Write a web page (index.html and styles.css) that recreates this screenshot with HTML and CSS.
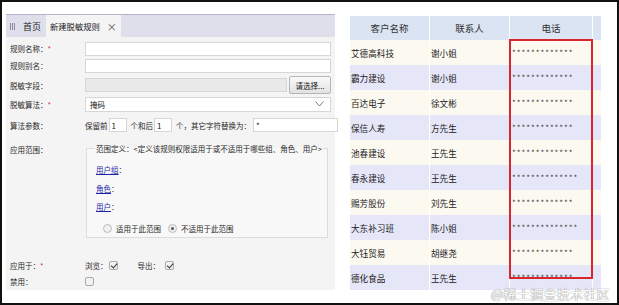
FILE: index.html
```html
<!DOCTYPE html>
<html lang="zh-CN">
<head>
    <meta charset="UTF-8">
    <title>脱敏规则</title>
    <link rel="stylesheet" href="styles.css">
</head>
<body>
<div class="frame">

    <div class="panel">
        <div class="tabbar">
            <span class="tab-menu">
                <svg width="6" height="7" viewBox="0 0 6 7"><path d="M0.5 0v7M2.5 0v7M4.5 0v7" stroke="#8a8a9a" stroke-width="1"/></svg>
            </span>
            <span class="tab">首页</span>
            <span class="tab active">新建脱敏规则<span class="tab-close">×</span></span>
        </div>

        <div class="form">
            <div class="row r1">
                <label class="lbl">规则名称：<em>*</em></label>
                <input type="text" class="txt wide">
            </div>
            <div class="row r2">
                <label class="lbl">规则别名：</label>
                <input type="text" class="txt wide">
            </div>
            <div class="row r3">
                <label class="lbl">脱敏字段：</label>
                <input type="text" class="txt field" disabled>
                <button class="btn">请选择...</button>
            </div>
            <div class="row r4">
                <label class="lbl">脱敏算法：<em>*</em></label>
                <div class="select">
                    <span>掩码</span>
                    <svg width="9" height="6" viewBox="0 0 9 6"><path d="M0.5 0.5l4 4.5 4-4.5" fill="none" stroke="#777" stroke-width="1"/></svg>
                </div>
            </div>
            <div class="row r5">
                <label class="lbl">算法参数：</label>
                <span class="txt-plain">保留前</span>
                <input type="text" class="txt num" value="1">
                <span class="txt-plain gap">个和后</span>
                <input type="text" class="txt num" value="1">
                <span class="txt-plain gap2">个，其它字符替换为：</span>
                <input type="text" class="txt mask" value="*">
            </div>
            <div class="row r6">
                <label class="lbl">应用范围：</label>
                <fieldset class="scope">
                    <legend>范围定义：&lt;定义该规则权限适用于或不适用于哪些组、角色、用户&gt;</legend>
                    <div class="scope-item"><a href="#">用户组</a>：</div>
                    <div class="scope-item"><a href="#">角色</a>：</div>
                    <div class="scope-item"><a href="#">用户</a>：</div>
                    <div class="radios">
                        <span class="radio"></span><span>适用于此范围</span>
                        <span class="radio on"></span><span>不适用于此范围</span>
                    </div>
                </fieldset>
            </div>
            <div class="row r7">
                <label class="lbl">应用于：<em>*</em></label>
                <span class="txt-plain">浏览：</span>
                <span class="check on"></span>
                <span class="txt-plain export">导出：</span>
                <span class="check on"></span>
            </div>
            <div class="row r8">
                <label class="lbl">禁用：</label>
                <span class="check"></span>
            </div>
        </div>
    </div>

    <div class="grid-wrap">
        <table class="grid">
            <thead>
                <tr><th class="c1">客户名称</th><th class="c2">联系人</th><th class="c3">电话</th><th class="c4"></th></tr>
            </thead>
            <tbody>
                <tr><td>艾德高科技</td><td>谢小姐</td><td class="tel">*************</td><td></td></tr>
                <tr><td>霸力建设</td><td>谢小姐</td><td class="tel">*************</td><td></td></tr>
                <tr><td>百达电子</td><td>徐文彬</td><td class="tel">*************</td><td></td></tr>
                <tr><td>保信人寿</td><td>方先生</td><td class="tel">*************</td><td></td></tr>
                <tr><td>池春建设</td><td>王先生</td><td class="tel">*************</td><td></td></tr>
                <tr><td>春永建设</td><td>王先生</td><td class="tel">**************</td><td></td></tr>
                <tr><td>赐芳股份</td><td>刘先生</td><td class="tel">*************</td><td></td></tr>
                <tr><td>大东补习班</td><td>陈小姐</td><td class="tel">**************</td><td></td></tr>
                <tr><td>大钰贸易</td><td>胡继尧</td><td class="tel">*************</td><td></td></tr>
                <tr><td>德化食品</td><td>王先生</td><td class="tel">*************</td><td></td></tr>
            </tbody>
        </table>
        <div class="highlight"></div>
    </div>

    <div class="watermark">@稀土掘金技术社区</div>
</div>
</body>
</html>
```

FILE: styles.css
```css
* { box-sizing: border-box; }
body { margin: 0; background: #fff; font-family: "Noto Sans CJK SC", "Noto Sans", sans-serif; color: #222; }
.frame { position: relative; width: 619px; height: 305px; border: 2px solid #111; display: flex; align-items: flex-start; overflow: hidden; }

/* left: rule form */
.panel { margin: 12px 0 0 4px; width: 329px; height: 276px; background: #f4f4f4; font-size: 7.5px; }
.tabbar { height: 23px; background: #dfdfec; border-top: 1px solid #b4b4cc; display: flex; align-items: stretch; }
.tab-menu { width: 14px; display: flex; align-items: center; justify-content: center; }
.tab { padding: 0 5px 0 3px; display: flex; align-items: center; font-size: 9px; color: #222; white-space: nowrap; }
.tab.active { background: #f4f4f4; padding: 0 6px 0 4px; width: 75px; font-size: 8.3px; }
.tab-close { margin-left: 7px; color: #555; font-size: 10px; }

.form { padding-left: 4px; }
.row { display: flex; align-items: center; }
.lbl { width: 75px; flex-shrink: 0; color: #2a2a2a; }
.lbl em { color: #d33; font-style: normal; }
.r1 { height: 15px; margin-top: 4px; }
.r2 { height: 15px; margin-top: 2px; }
.r3 { height: 20px; margin-top: 2px; }
.r4 { height: 16px; margin-top: 1px; }
.r5 { height: 16px; margin-top: 5px; }
.r6 { margin-top: 10px; align-items: flex-start; }
.r6 .lbl { margin-top: 1px; }
.r7 { height: 12px; margin-top: 21px; }
.r8 { height: 12px; margin-top: 4px; }

.txt { height: 14px; border: 1px solid #d6d6d6; background: #fff; font: 8px "Noto Sans CJK SC", sans-serif; color: #222; padding: 0 2px; }
.wide { width: 246px; }
.field { width: 202px; background: #e9e9e9; }
.btn { margin-left: 2px; width: 42px; height: 18px; padding: 0; border: 1px solid #b5b5b5; border-radius: 2px; background: linear-gradient(#fafafa, #e2e2e2); font: 7.5px "Noto Sans CJK SC", sans-serif; color: #222; }
.select { width: 246px; height: 15px; border: 1px solid #d6d6d6; background: #fff; display: flex; align-items: center; justify-content: space-between; padding: 0 6px 0 4px; }
.txt-plain { color: #2a2a2a; white-space: nowrap; }
.num { width: 18px; margin-left: 1px; }
.gap { margin-left: 4px; }
.gap2 { margin-left: 4px; }
.mask { width: 85px; margin-left: 2px; }

.scope { margin: 0 0 0 1px; padding: 9px 0 0 9px; width: 242px; height: 95px; border: 1px solid #dcdcdc; background: #f8f8f8; }
.scope legend { padding: 0 1px; color: #2a2a2a; margin-left: -1px; white-space: nowrap; }
.scope-item { height: 18.5px; line-height: 14px; color: #2a2a2a; }
.scope-item a { color: #1f1fa8; }
.radios { display: flex; align-items: center; margin-top: 4px; margin-left: 7px; color: #2a2a2a; }
.radio { width: 9px; height: 9px; border: 1px solid #bbb; border-radius: 50%; background: #f0f0f0; margin-right: 4px; position: relative; }
.radio.on::after { content: ""; position: absolute; left: 2px; top: 2px; width: 3px; height: 3px; border-radius: 50%; background: #555; }
.radios .radio.on { margin-left: 7px; }

.check { width: 9px; height: 9px; border: 1px solid #aaa; border-radius: 2px; background: #f2f2f2; margin-left: 1px; position: relative; }
.check.on::after { content: ""; position: absolute; left: 2px; top: 0px; width: 3px; height: 5px; border: solid #333; border-width: 0 1.5px 1.5px 0; transform: rotate(40deg); }
.export { margin-left: 20px; }
.export + .check { margin-left: 5px; }
.r8 .check { margin-left: 0; }

/* right: masked grid */
.grid-wrap { position: relative; margin: 14px 0 0 15px; }
.grid { border-collapse: separate; border-spacing: 0; font-size: 8.6px; }
.grid th { height: 24px; background: #dbe4f2; font-weight: normal; color: #333; border-right: 1px solid #fff; padding: 0; font-size: 9.5px; }
.grid td { height: 25px; padding: 0 0 0 1px; color: #222; border-right: 1px solid #fff; white-space: nowrap; }
.grid tbody tr:nth-child(odd) td { background: #fcf9f1; }
.grid tbody tr:nth-child(even) td { background: #e6e6f9; }
.c1, .c2 { width: 80px; }
.c3 { width: 83px; }
.c4 { width: 9px; }
.grid td.tel { font-size: 8px; color: #444; letter-spacing: 1px; padding-left: 2px; }
.highlight { position: absolute; left: 159px; top: 23px; width: 84px; height: 240px; border: 2px solid #d7262e; }

.watermark { position: absolute; left: 489px; top: 282px; font-size: 13px; color: #fff; text-shadow: 0 0 1px #888, 0 0 1px #888; letter-spacing: 0.3px; }
```
